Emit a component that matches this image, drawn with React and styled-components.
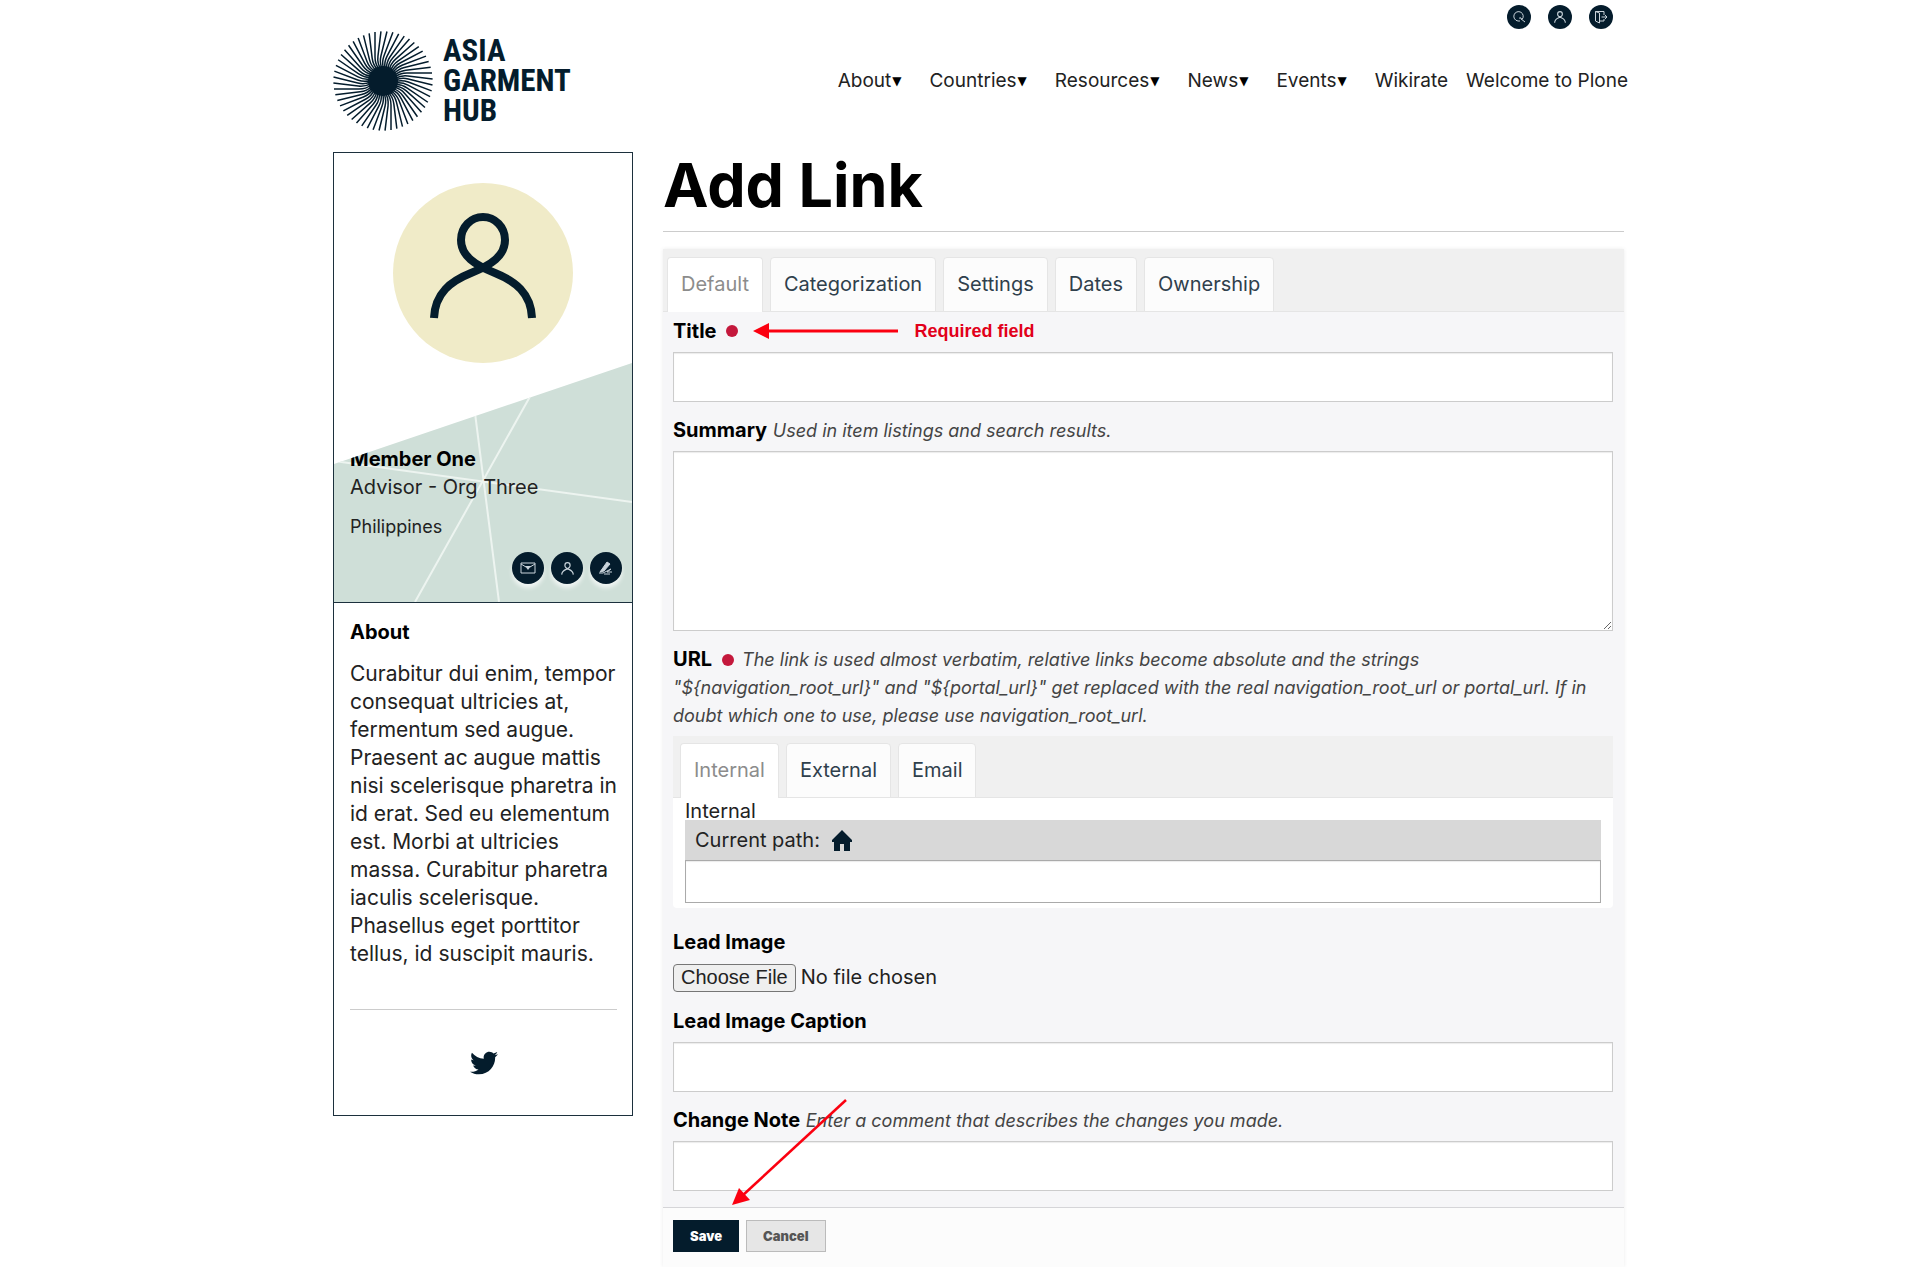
import React from "react";
import styled, { createGlobalStyle } from "styled-components";
import { FaTwitter } from "react-icons/fa";

const navItems = [
  { label: "About", menu: true },
  { label: "Countries", menu: true },
  { label: "Resources", menu: true },
  { label: "News", menu: true },
  { label: "Events", menu: true },
  { label: "Wikirate" },
  { label: "Welcome to Plone" },
];

const formTabs = ["Default", "Categorization", "Settings", "Dates", "Ownership"];
const linkTabs = ["Internal", "External", "Email"];

const urlHelp =
  'The link is used almost verbatim, relative links become absolute and the strings "${navigation_root_url}" and "${portal_url}" get replaced with the real navigation_root_url or portal_url. If in doubt which one to use, please use navigation_root_url.';

const RAYS = 52;

const Logo = () => (
  <LogoLink href="#home">
    <svg width="100" height="100" viewBox="-50 -50 100 100" aria-hidden="true">
      <g fill="none" stroke="#041c2c">
        {Array.from({ length: RAYS }, (_, i) => (
          <path
            key={i}
            d="M-8 -49V-24Q-8 -17 -4 -12"
            strokeWidth="1.5"
            transform={`rotate(${(i * 360) / RAYS})`}
          />
        ))}
      </g>
      <circle r="15" fill="#041c2c" />
    </svg>
    <LogoText>
      <span>ASIA</span>
      <span>GARMENT</span>
      <span>HUB</span>
    </LogoText>
  </LogoLink>
);

const PersonPath = ({ width }) => (
  <path
    d="M41 135C42 110 58 98 78 90C98 82 112 73 112 57C112 44 102 34 90 34C78 34 68 44 68 57C68 73 82 82 102 90C122 98 138 110 139 135"
    fill="none"
    stroke="currentColor"
    strokeWidth={width}
  />
);

const PersonIcon = ({ size }) => (
  <svg width={size} height={size} viewBox="35 28 110 110" aria-hidden="true">
    <PersonPath width="10" />
  </svg>
);

const SearchIcon = () => (
  <svg width="14" height="14" viewBox="0 0 14 14" fill="none" stroke="currentColor" aria-hidden="true">
    <path d="M10 9.5A4.7 4.7 0 1 0 6 11H8" />
    <path d="M7 8.5C8 7 10 8 9.5 9.5M8.5 8.5L13 12" />
  </svg>
);

const ExitIcon = () => (
  <svg width="14" height="14" viewBox="0 0 14 14" fill="none" stroke="currentColor" aria-hidden="true">
    <path d="M1.5 1.5H10V5M10 9V11H5.5M1.5 1.5V11L5.5 13V3L1.5 1.5M7.5 7H13M11 5L13 7L11 9" />
  </svg>
);

const MailIcon = () => (
  <svg width="16" height="14" viewBox="0 0 16 14" fill="none" stroke="currentColor" aria-hidden="true">
    <path d="M1 2H15V12H1ZM1 3L6 6M15 3L10 6" />
    <path d="M5 5H11L8 9Z" fill="currentColor" stroke="none" />
  </svg>
);

const PenIcon = () => (
  <svg width="16" height="16" viewBox="0 0 16 16" fill="none" stroke="currentColor" aria-hidden="true">
    <path d="M2 12L9 2L12 4L6 11Z" fill="currentColor" />
    <path d="M1 13H5L13 9L9 12H14M6 14H12" />
  </svg>
);

const HomeIcon = () => (
  <svg width="20" height="21" viewBox="0 0 20 21" fill="#041c2c" aria-hidden="true">
    <path d="M10 0L20 10V12H18V21H12V14H8V21H2V12H0V10Z" />
  </svg>
);

const Tabs = ({ names, label, inner }) => {
  const [active, setActive] = React.useState(names[0]);

  return (
    <TabBar role="tablist" aria-label={label} $inner={inner}>
      {names.map((name) => (
        <Tab
          key={name}
          type="button"
          role="tab"
          aria-selected={active === name}
          $active={active === name}
          onClick={() => setActive(name)}
        >
          {name}
        </Tab>
      ))}
    </TabBar>
  );
};

const App = () => {
  const [title, setTitle] = React.useState("");
  const [summary, setSummary] = React.useState("");
  const [path, setPath] = React.useState("");
  const [caption, setCaption] = React.useState("");
  const [note, setNote] = React.useState("");

  return (
    <Page>
      <GlobalStyle />
      <Header>
        <Logo />
        <HeaderRight>
          <Tools>
            <RoundButton type="button" aria-label="Search">
              <SearchIcon />
            </RoundButton>
            <RoundButton type="button" aria-label="Account">
              <PersonIcon size={12} />
            </RoundButton>
            <RoundButton type="button" aria-label="Log out">
              <ExitIcon />
            </RoundButton>
          </Tools>
          <Nav>
            {navItems.map((item) => (
              <NavLink key={item.label} href="#nav" $menu={item.menu}>
                {item.label}
                {item.menu && <Caret>▼</Caret>}
              </NavLink>
            ))}
          </Nav>
        </HeaderRight>
      </Header>

      <Columns>
        <Sidebar>
          <Avatar width="180" height="180" viewBox="0 0 180 180" role="img" aria-label="Member One">
            <circle cx="90" cy="90" r="90" fill="#f0ebc8" />
            <PersonPath width="8" />
          </Avatar>
          <Card>
            <CardLines viewBox="0 0 298 239" preserveAspectRatio="none" aria-hidden="true">
              <path d="M0 98L298 139M141 50L165 239M198 30L81 239" />
            </CardLines>
            <CardBody>
              <MemberName>Member One</MemberName>
              <div>Advisor - Org Three</div>
              <Country>Philippines</Country>
              <CardActions>
                <RoundButton type="button" aria-label="Send email" $large>
                  <MailIcon />
                </RoundButton>
                <RoundButton type="button" aria-label="View profile" $large>
                  <PersonIcon size={13} />
                </RoundButton>
                <RoundButton type="button" aria-label="Edit profile" $large>
                  <PenIcon />
                </RoundButton>
              </CardActions>
            </CardBody>
          </Card>
          <Bio>
            <BioTitle>About</BioTitle>
            <BioText>
              Curabitur dui enim, tempor consequat ultricies at, fermentum sed
              augue. Praesent ac augue mattis nisi scelerisque pharetra in id
              erat. Sed eu elementum est. Morbi at ultricies massa. Curabitur
              pharetra iaculis scelerisque. Phasellus eget porttitor tellus, id
              suscipit mauris.
            </BioText>
            <Social>
              <SocialLink href="#twitter" aria-label="Twitter">
                <FaTwitter size={28} color="#041c2c" />
              </SocialLink>
            </Social>
          </Bio>
        </Sidebar>

        <Main>
          <PageTitle>Add Link</PageTitle>
          <Form onSubmit={(e) => e.preventDefault()}>
            <Tabs names={formTabs} label="Form sections" />
            <Fields>
              <Field>
                <TitleRow>
                  <Label htmlFor="title">Title</Label>
                  <Required />
                  <ArrowLeft width="145" height="16" viewBox="0 0 145 16" aria-hidden="true">
                    <path d="M14 8H145" stroke="#fb0010" strokeWidth="3" />
                    <path d="M0 8L16 0V16Z" fill="#fb0010" />
                  </ArrowLeft>
                  <Callout>Required field</Callout>
                </TitleRow>
                <Input id="title" type="text" value={title} onChange={(e) => setTitle(e.target.value)} />
              </Field>

              <Field>
                <LabelRow>
                  <Label htmlFor="summary">Summary</Label> <Help>Used in item listings and search results.</Help>
                </LabelRow>
                <TextArea id="summary" value={summary} onChange={(e) => setSummary(e.target.value)} />
              </Field>

              <Field>
                <LabelRow>
                  <Label htmlFor="path">URL</Label>
                  <Required />
                  <Help>{urlHelp}</Help>
                </LabelRow>
                <LinkPanel>
                  <Tabs names={linkTabs} label="Link type" inner />
                  <LinkBody>
                    <PanelName>Internal</PanelName>
                    <PathBar>
                      Current path:
                      <HomeLink href="#root" aria-label="Home">
                        <HomeIcon />
                      </HomeLink>
                    </PathBar>
                    <PathInput id="path" type="text" value={path} onChange={(e) => setPath(e.target.value)} />
                  </LinkBody>
                </LinkPanel>
              </Field>

              <FileField>
                <LabelRow>
                  <Label htmlFor="image">Lead Image</Label>
                </LabelRow>
                <FileInput id="image" type="file" />
              </FileField>

              <Field>
                <LabelRow>
                  <Label htmlFor="caption">Lead Image Caption</Label>
                </LabelRow>
                <Input id="caption" type="text" value={caption} onChange={(e) => setCaption(e.target.value)} />
              </Field>

              <Field>
                <LabelRow>
                  <Label htmlFor="note">Change Note</Label>{" "}
                  <Help>Enter a comment that describes the changes you made.</Help>
                </LabelRow>
                <Input id="note" type="text" value={note} onChange={(e) => setNote(e.target.value)} />
                <SaveArrow width="116" height="108" viewBox="0 0 116 108" aria-hidden="true">
                  <path d="M114 2L10 98" stroke="#fb0010" strokeWidth="2.5" />
                  <path d="M0 107L7 90L18 102Z" fill="#fb0010" />
                </SaveArrow>
              </Field>
            </Fields>
            <Footer>
              <Button type="submit" $primary>
                Save
              </Button>
              <Button type="button">Cancel</Button>
            </Footer>
          </Form>
        </Main>
      </Columns>
    </Page>
  );
};

const GlobalStyle = createGlobalStyle`
  * {
    box-sizing: border-box;
  }

  body {
    margin: 0;
    background: #fff;
    color: #222;
    font-family: Inter, "Liberation Sans", sans-serif;
    font-size: 20px;
    line-height: 28px;
  }
`;

const Page = styled.div`
  max-width: 1336px;
  margin: 0 auto;
  padding-left: 41px;
`;

const Header = styled.header`
  display: flex;
  justify-content: space-between;
  height: 152px;
`;

const LogoLink = styled.a`
  display: flex;
  gap: 10px;
  padding-top: 31px;
  color: #041c2c;
  text-decoration: none;
`;

const LogoText = styled.span`
  display: flex;
  flex-direction: column;
  padding-top: 5px;
  font-family: "Roboto Condensed", "Liberation Sans Narrow", "Liberation Sans", sans-serif;
  font-size: 31px;
  font-weight: 700;
  line-height: 30px;
`;

const HeaderRight = styled.div`
  display: flex;
  flex-direction: column;
  align-items: flex-end;
  gap: 38px;
  padding-top: 5px;
`;

const Tools = styled.div`
  display: flex;
  gap: 17px;
  padding-right: 15px;
`;

const RoundButton = styled.button`
  display: flex;
  align-items: center;
  justify-content: center;
  width: ${(props) => (props.$large ? 32 : 24)}px;
  height: ${(props) => (props.$large ? 32 : 24)}px;
  padding: 0;
  border: 0;
  border-radius: 50%;
  background: #041c2c;
  color: #c9d3da;
  box-shadow: ${(props) => (props.$large ? "0 4px 4px rgba(255, 255, 255, 0.7)" : "none")};
`;

const Nav = styled.nav`
  display: flex;
  gap: 18px;
`;

const NavLink = styled.a`
  display: flex;
  padding-right: ${(props) => (props.$menu ? 10 : 0)}px;
  color: #222;
  font-size: 19px;
  text-decoration: none;
`;

const Caret = styled.span`
  margin-left: 1px;
  color: #000;
  font-family: "DejaVu Sans", sans-serif;
  font-size: 12px;
`;

const Columns = styled.div`
  display: flex;
  align-items: flex-start;
  gap: 30px;
`;

const Sidebar = styled.aside`
  flex: 0 0 300px;
  border: 1px solid #1c303d;
`;

const Avatar = styled.svg`
  display: block;
  margin: 30px auto 0;
  color: #041c2c;
`;

const Card = styled.div`
  display: grid;
  border-bottom: 1px solid #1c303d;
  background: #cfdfd8;
  clip-path: polygon(0 101px, 100% 0, 100% 100%, 0 100%);
`;

const CardLines = styled.svg`
  grid-area: 1 / 1;
  width: 100%;
  height: 100%;
  fill: none;
  stroke: #edf4f0;
  stroke-width: 2;
`;

const CardBody = styled.div`
  grid-area: 1 / 1;
  padding: 82px 10px 18px 16px;
`;

const MemberName = styled.div`
  color: #000;
  font-weight: 700;
`;

const Country = styled.div`
  margin-top: 12px;
  font-size: 18px;
`;

const CardActions = styled.div`
  display: flex;
  justify-content: flex-end;
  gap: 7px;
  margin-top: 11px;
`;

const Bio = styled.div`
  padding: 15px 15px 38px 16px;
`;

const BioTitle = styled.h2`
  margin: 0 0 14px;
  color: #000;
  font-size: 20px;
  line-height: 28px;
`;

const BioText = styled.p`
  margin: 0;
  font-size: 21px;
`;

const Social = styled.div`
  display: flex;
  justify-content: center;
  margin-top: 41px;
  padding-top: 39px;
  border-top: 1px solid #ccc;
`;

const SocialLink = styled.a`
  display: flex;
`;

const Main = styled.main`
  flex: 1;
  min-width: 0;
  padding-right: 4px;
`;

const PageTitle = styled.h1`
  margin: 0 0 17px;
  padding-bottom: 13px;
  border-bottom: 1px solid #ccc;
  color: #000;
  font-size: 61px;
  font-weight: 700;
  line-height: 66px;
`;

const Form = styled.form`
  background: #f6f6f8;
  box-shadow: 0 0 4px rgba(0, 0, 0, 0.08);
`;

const TabBar = styled.div`
  display: flex;
  gap: 7px;
  height: ${(props) => (props.$inner ? 62 : 63)}px;
  padding: ${(props) => (props.$inner ? "7px 7px 0" : "8px 4px 0")};
  border-bottom: 1px solid #e5e5e5;
  background: #f0f0f0;
`;

const Tab = styled.button`
  height: 55px;
  padding: 0 13px 2px;
  border: 1px solid #e5e5e5;
  border-bottom: ${(props) => (props.$active ? "0" : "1px solid #e5e5e5")};
  border-radius: 4px 4px 0 0;
  background: ${(props) => (props.$active ? "#fff" : "#fcfcfc")};
  color: ${(props) => (props.$active ? "#8c8c8c" : "#2f404c")};
  font: inherit;
`;

const Fields = styled.div`
  display: flex;
  flex-direction: column;
  gap: 14px;
  padding: 5px 11px 16px 10px;
`;

const Field = styled.div`
  position: relative;
`;

const FileField = styled(Field)`
  padding-top: 6px;
`;

const LabelRow = styled.div`
  margin-bottom: 7px;
`;

const TitleRow = styled(LabelRow)`
  display: flex;
  align-items: center;
`;

const Label = styled.label`
  color: #000;
  font-weight: 700;
`;

const Required = styled.span`
  display: inline-block;
  width: 12px;
  height: 12px;
  margin: 0 8px 0 10px;
  border-radius: 50%;
  background: #c4183c;
`;

const ArrowLeft = styled.svg`
  margin: 0 16px 0 7px;
`;

const Callout = styled.span`
  color: #e2001a;
  font-family: "Liberation Sans", Arial, sans-serif;
  font-size: 18px;
  font-weight: 700;
`;

const Help = styled.span`
  color: #444;
  font-size: 18px;
  font-style: italic;
  line-height: 20px;
`;

const Input = styled.input`
  display: block;
  width: 100%;
  height: 50px;
  padding: 0 12px;
  border: 1px solid #ccc;
  background: #fff;
  box-shadow: inset 0 1px 1px rgba(0, 0, 0, 0.08);
  font: inherit;
`;

const TextArea = styled.textarea`
  display: block;
  width: 100%;
  height: 180px;
  padding: 12px;
  border: 1px solid #ccc;
  background: #fff;
  box-shadow: inset 0 1px 1px rgba(0, 0, 0, 0.08);
  font: inherit;
  resize: vertical;
`;

const LinkPanel = styled.div`
  border-radius: 4px;
  background: #fff;
`;

const LinkBody = styled.div`
  padding: 0 12px 5px;
`;

const PanelName = styled.div`
  height: 22px;
  line-height: 26px;
`;

const PathBar = styled.div`
  display: flex;
  align-items: center;
  gap: 12px;
  height: 40px;
  padding: 0 10px;
  background: #d8d8d8;
`;

const HomeLink = styled.a`
  display: flex;
`;

const PathInput = styled(Input)`
  height: 43px;
  border-color: #aaa;
`;

const FileInput = styled.input`
  display: block;
  width: 100%;
  height: 30px;
  font: inherit;
  line-height: 28px;

  &::file-selector-button {
    height: 28px;
    margin: 0 5px 0 0;
    padding: 0 7px;
    border: 1px solid #767676;
    border-radius: 4px;
    background: #efefef;
    color: #222;
    font-family: "Liberation Sans", Arial, sans-serif;
    font-size: 20px;
  }
`;

const SaveArrow = styled.svg`
  position: absolute;
  top: -8px;
  left: 59px;
  pointer-events: none;
`;

const Footer = styled.div`
  display: flex;
  gap: 7px;
  padding: 12px 10px 15px;
  border-top: 1px solid #d5d5d8;
  background: #fcfcfc;
`;

const Button = styled.button`
  height: 32px;
  padding: 0 16px;
  border: 1px solid ${(props) => (props.$primary ? "#041c2c" : "#bbb")};
  background: ${(props) => (props.$primary ? "#041c2c" : "#e6e6e6")};
  color: ${(props) => (props.$primary ? "#fff" : "#555")};
  font-family: inherit;
  font-size: 13px;
  font-weight: 900;
`;

export default App;
